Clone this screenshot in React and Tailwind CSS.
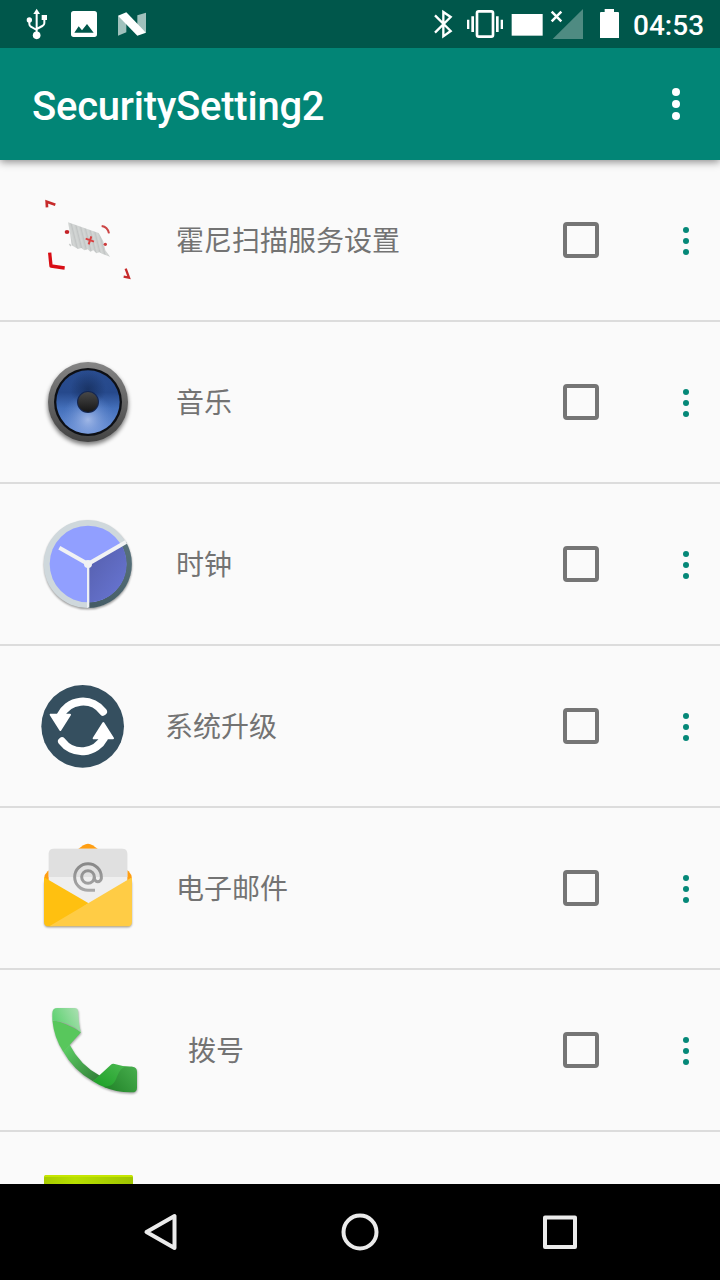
import React from "react";

function ScannerIcon() {
  return (
    <svg className="h-[120px] w-[140px] shrink-0" viewBox="0 0 420 360" fill="none">
      <defs>
        <pattern id="bars" width="13" height="20" patternUnits="userSpaceOnUse" patternTransform="skewX(14)">
          <rect width="13" height="20" fill="#cdd0cf" />
          <rect x="2" width="3" height="20" fill="#c0c3c3" />
          <rect x="9" width="2" height="20" fill="#d9dcdb" />
        </pattern>
        <filter id="soft" x="-20%" y="-20%" width="140%" height="140%">
          <feGaussianBlur stdDeviation="1.6" />
        </filter>
      </defs>
      <g filter="url(#soft)">
        <path d="M144 127L236 159L250 184L256 211L270 230L246 221L238 217L229 220L220 211L211 215L203 208L193 211L184 204L174 207L160 199L155 195L151 165Z" fill="url(#bars)" />
        <path d="M148 192l5 6" stroke="#c9cccb" strokeWidth="4" />
        <path d="M106 74L80 65L81 82" stroke="#c62c2c" strokeWidth="8" />
        <path d="M89 218L93 258L134 264" stroke="#d80c12" strokeWidth="10" strokeLinejoin="round" />
        <path d="M317 266L327 293L311 290" stroke="#c62c2c" strokeWidth="7" />
        <path d="M245 138Q263 140 267 160" stroke="#cc4444" strokeWidth="6" />
        <path d="M197 176L222 185M214 169L206 193" stroke="#d94141" strokeWidth="6" />
        <ellipse cx="141" cy="156" rx="7" ry="6" fill="#c42428" />
        <ellipse cx="256" cy="193" rx="5" ry="5" fill="#cc3a3c" />
      </g>
    </svg>
  );
}

function MusicIcon() {
  return (
    <svg className="h-[120px] w-[140px] shrink-0" viewBox="0 6 420 360">
      <defs>
        <linearGradient id="rim" x1="0" y1="0" x2="0" y2="1">
          <stop offset="0" stopColor="#858585" />
          <stop offset="1" stopColor="#434343" />
        </linearGradient>
        <linearGradient id="cone" x1="0" y1="0" x2="0" y2="1">
          <stop offset="0" stopColor="#294c8e" />
          <stop offset="0.35" stopColor="#26498c" />
          <stop offset="0.6" stopColor="#4470bb" />
          <stop offset="1" stopColor="#6b91d7" />
        </linearGradient>
        <radialGradient id="coneLight" cx="0.5" cy="0.78" r="0.42">
          <stop offset="0" stopColor="#adc1ec" stopOpacity="0.85" />
          <stop offset="1" stopColor="#6b91d7" stopOpacity="0" />
        </radialGradient>
        <radialGradient id="coneDark" cx="0.5" cy="0.3" r="0.28">
          <stop offset="0" stopColor="#152c58" stopOpacity="0.75" />
          <stop offset="1" stopColor="#152c58" stopOpacity="0" />
        </radialGradient>
        <linearGradient id="cap" x1="0" y1="0" x2="0" y2="1">
          <stop offset="0" stopColor="#484848" />
          <stop offset="1" stopColor="#171717" />
        </linearGradient>
        <filter id="speakerShadow" x="-20%" y="-20%" width="140%" height="140%">
          <feGaussianBlur stdDeviation="6" />
        </filter>
      </defs>
      <circle cx="204" cy="194" r="121" fill="#000" opacity="0.5" filter="url(#speakerShadow)" />
      <circle cx="204" cy="186" r="120" fill="url(#rim)" />
      <circle cx="204" cy="186" r="102" fill="#0d0f14" />
      <circle cx="204" cy="186" r="95" fill="url(#cone)" />
      <circle cx="204" cy="186" r="95" fill="url(#coneDark)" />
      <circle cx="204" cy="186" r="95" fill="url(#coneLight)" />
      <circle cx="204" cy="186" r="33" fill="#142650" />
      <circle cx="204" cy="186" r="30" fill="url(#cap)" />
    </svg>
  );
}

function ClockIcon() {
  return (
    <svg className="h-[120px] w-[140px] shrink-0" viewBox="0 12 420 360">
      <defs>
        <linearGradient id="clockShade" x1="204" y1="192" x2="310" y2="270" gradientUnits="userSpaceOnUse">
          <stop offset="0" stopColor="#5862b2" />
          <stop offset="1" stopColor="#6673cf" />
        </linearGradient>
        <linearGradient id="clockRim" x1="330" y1="130" x2="210" y2="320" gradientUnits="userSpaceOnUse">
          <stop offset="0" stopColor="#58727c" />
          <stop offset="1" stopColor="#445b64" />
        </linearGradient>
        <filter id="clockShadow" x="-20%" y="-20%" width="140%" height="140%">
          <feGaussianBlur stdDeviation="3" />
        </filter>
      </defs>
      <circle cx="204" cy="196" r="132" fill="#000" opacity="0.4" filter="url(#clockShadow)" />
      <circle cx="203" cy="192" r="132" fill="#cfd8dc" />
      <path d="M204 192L318 126A132 132 0 0 1 204 324Z" fill="url(#clockRim)" />
      <circle cx="204" cy="192" r="115" fill="#919fff" />
      <path d="M204 192L304 134A115 115 0 0 1 204 307Z" fill="url(#clockShade)" />
      <path d="M204 192L318 126" stroke="#f1f2f4" strokeWidth="12" />
      <path d="M204 192L118 143" stroke="#f1f2f4" strokeWidth="12" />
      <path d="M204.500 192V323" stroke="#eef0f4" strokeWidth="7" />
      <circle cx="204" cy="192" r="12" fill="#f1f2f4" />
    </svg>
  );
}

function UpdateIcon() {
  return (
    <svg className="h-[120px] w-[140px] shrink-0" viewBox="0 -12 420 360" fill="none">
      <circle cx="188" cy="169" r="124" fill="#354f5f" />
      <path d="M121 138A75 75 0 0 1 249 125" stroke="#fff" strokeWidth="24" strokeLinecap="round" />
      <path d="M92 134H150L121 180Z" fill="#fff" stroke="#fff" strokeWidth="6" strokeLinejoin="round" />
      <path d="M126 214A75 75 0 0 0 252 204" stroke="#fff" strokeWidth="24" strokeLinecap="round" />
      <path d="M221 205H279L250 159Z" fill="#fff" stroke="#fff" strokeWidth="6" strokeLinejoin="round" />
    </svg>
  );
}

function EmailIcon() {
  return (
    <svg className="h-[120px] w-[140px] shrink-0" viewBox="0 -6 420 360" fill="none">
      <defs>
        <linearGradient id="at" x1="0" y1="96" x2="0" y2="186" gradientUnits="userSpaceOnUse">
          <stop offset="0" stopColor="#868686" />
          <stop offset="1" stopColor="#aaaaaa" />
        </linearGradient>
        <filter id="mailShadow" x="-20%" y="-20%" width="140%" height="140%">
          <feGaussianBlur stdDeviation="3" />
        </filter>
      </defs>
      <rect x="73" y="150" width="262" height="142" rx="12" fill="#000" opacity="0.4" filter="url(#mailShadow)" />
      <path d="M72 146Q73 133 83 124L190 46Q204 37 218 46L326 124Q335 133 336 146L320 160H88Z" fill="#ff9e12" />
      <path d="M86 72Q86 56 102 56H306Q322 56 322 72V230H86Z" fill="#efefef" />
      <path d="M86 72Q86 56 102 56H306Q322 56 322 72V141H86Z" fill="#e0e0e0" />
      <path d="M72 142L206 220L100 289H86Q72 289 72 275Z" fill="#ffc010" />
      <path d="M336 142V275Q336 289 322 289H88Z" fill="#ffcc45" />
      <circle cx="204" cy="141" r="19" stroke="url(#at)" strokeWidth="9" />
      <path d="M225 181H204A40 40 0 1 1 244 141V146A11 13 0 0 1 223 146V141" stroke="url(#at)" strokeWidth="9" />
    </svg>
  );
}

function PhoneIcon() {
  return (
    <svg className="h-[120px] w-[140px] shrink-0" viewBox="0 0 420 360">
      <defs>
        <linearGradient id="earpiece" x1="98" y1="100" x2="175" y2="60" gradientUnits="userSpaceOnUse">
          <stop offset="0" stopColor="#59d16d" />
          <stop offset="1" stopColor="#a9dfb0" />
        </linearGradient>
        <linearGradient id="handle" x1="135" y1="180" x2="235" y2="270" gradientUnits="userSpaceOnUse">
          <stop offset="0" stopColor="#5acb62" />
          <stop offset="1" stopColor="#327e38" />
        </linearGradient>
        <linearGradient id="mouthpiece" x1="345" y1="235" x2="275" y2="300" gradientUnits="userSpaceOnUse">
          <stop offset="0" stopColor="#45ab4b" />
          <stop offset="1" stopColor="#26882d" />
        </linearGradient>
        <linearGradient id="fold" x1="290" y1="220" x2="245" y2="290" gradientUnits="userSpaceOnUse">
          <stop offset="0" stopColor="#45b54b" />
          <stop offset="1" stopColor="#21a32b" />
        </linearGradient>
        <filter id="phoneShadow" x="-20%" y="-20%" width="140%" height="140%">
          <feGaussianBlur stdDeviation="3" />
        </filter>
      </defs>
      <path d="M97 70Q97 54 112 54H163Q175 54 175 67Q176 104 183 127L149 164Q180 225 240 257L276 222Q305 231 337 230Q351 231 351 245V293Q351 307 336 307Q272 308 219 274Q160 240 130 185Q97 135 97 70Z" transform="translate(1 4)" fill="#000" opacity="0.35" filter="url(#phoneShadow)" />
      <path d="M149 164Q180 225 240 257L219 274Q160 240 130 185Z" fill="url(#handle)" />
      <path d="M97 91Q140 98 183 127L130 186Q102 143 97 91Z" fill="#58c75c" />
      <path d="M97 70Q97 54 112 54H163Q175 54 175 67Q176 104 183 127Q150 97 97 91Z" fill="url(#earpiece)" />
      <path d="M219 274L272 225Q278 219 287 223Q310 231 337 230L290 295L260 294Q238 287 219 274Z" fill="url(#fold)" />
      <path d="M314 230H337Q351 231 351 245V293Q351 307 336 307Q291 308 250 290C300 290 281 247 314 230Z" fill="url(#mouthpiece)" />
    </svg>
  );
}

function GreenAppIcon() {
  return (
    <svg className="h-[120px] w-[140px] shrink-0" viewBox="0 0 140 120">
      <defs>
        <linearGradient id="lime" x1="0" y1="0" x2="1" y2="0">
          <stop offset="0" stopColor="#a8cb00" />
          <stop offset="0.35" stopColor="#b7df00" />
          <stop offset="1" stopColor="#9fc400" />
        </linearGradient>
      </defs>
      <rect x="24" y="23" width="89" height="80" rx="3" fill="url(#lime)" />
      <path d="M26 23H111Q113 23 113 25H24Q24 23 26 23Z" fill="#c6e600" />
    </svg>
  );
}

const apps = [
  { name: "霍尼扫描服务设置", Icon: ScannerIcon, indent: "pl-4" },
  { name: "音乐", Icon: MusicIcon, indent: "pl-4" },
  { name: "时钟", Icon: ClockIcon, indent: "pl-4" },
  { name: "系统升级", Icon: UpdateIcon, indent: "pl-[5px]" },
  { name: "电子邮件", Icon: EmailIcon, indent: "pl-4" },
  { name: "拨号", Icon: PhoneIcon, indent: "pl-7" },
];

function AppRow({ name, Icon, indent }) {
  return (
    <li className="flex h-[162px] shrink-0 items-center border-b-2 border-[#dcdcdc] pl-5">
      <Icon />
      <span className={`flex-1 pb-0.5 text-[28px] leading-10 text-[#737373] ${indent}`}>{name}</span>
      <button aria-label={name} className="mr-[83px] size-9 rounded-[4px] border-4 border-[#757575]" />
      <button className="mt-0.5 mr-[31px] flex w-[7px] flex-col items-center gap-[5px]">
        <span className="size-[6px] rounded-full bg-[#058878]" />
        <span className="size-[6px] rounded-full bg-[#058878]" />
        <span className="size-[6px] rounded-full bg-[#058878]" />
      </button>
    </li>
  );
}

function StatusBar() {
  return (
    <div className="z-20 flex h-12 shrink-0 items-center bg-[#00574b] pl-6 text-white">
      <svg className="h-12 w-6" viewBox="72 0 72 144" fill="none" stroke="#fff" strokeWidth="6">
        <path d="M110 106V36M88 60V72Q88 78 94 81L110 90M133 53V70Q133 75 127 78L110 87" />
        <path d="M100 42L110 26L120 42Z" fill="#fff" stroke="none" />
        <circle cx="110" cy="106" r="11.500" fill="#fff" stroke="none" />
        <circle cx="88" cy="60" r="8" fill="#fff" stroke="none" />
        <path d="M125 45H141V60H125Z" fill="#fff" stroke="none" />
      </svg>
      <svg className="ml-5 h-12 w-8" viewBox="204 0 96 144">
        <path fillRule="evenodd" d="M221 33H283Q291 33 291 41V103Q291 111 283 111H221Q213 111 213 103V41Q213 33 221 33ZM223 98H281L261 72L246 91L236 79Z" fill="#fff" />
      </svg>
      <svg className="ml-4 h-12 w-8" viewBox="348 0 96 144">
        <path d="M354 47L379 60V97L354 107ZM412 46L438 38V98L412 79Z" fill="#a0c1bc" />
        <path d="M354 47L379 37L438 98L412 107Z" fill="#fff" />
      </svg>
      <div className="ml-auto flex items-center">
        <svg className="h-12 w-8" viewBox="27 0 96 144" fill="none" stroke="#fff" strokeWidth="7">
          <path d="M45 46L92 93L70 109V36L92 51L45 98" />
        </svg>
        <svg className="ml-1 h-12 w-10" viewBox="135 0 120 144" fill="#fff">
          <rect x="171" y="34" width="48" height="76" rx="5" fill="none" stroke="#fff" strokeWidth="8" />
          <path d="M141 59H148V87H141ZM154 49H162V96H154ZM228 49H236V96H228ZM242 59H249V87H242Z" />
        </svg>
        <svg className="h-12 w-10" viewBox="255 0 120 144">
          <rect x="275" y="42" width="93" height="65" fill="#fff" />
        </svg>
        <svg className="h-12 w-10" viewBox="375 0 120 144">
          <path d="M489 27V117H398Z" fill="#4f8b82" />
          <path d="M395 35L424 64M424 35L395 64" stroke="#fff" strokeWidth="7.500" />
        </svg>
        <svg className="ml-3 h-12 w-6" viewBox="531 0 72 144">
          <path d="M554 27H582V36H594Q597 36 597 39V114H540V39Q540 36 543 36H554Z" fill="#fff" />
        </svg>
        <span className="ml-3 w-[87px] pt-1 font-['Roboto',sans-serif] text-[28px] leading-8 font-medium">04:53</span>
      </div>
    </div>
  );
}

export default function App() {
  return (
    <div className="flex h-[1280px] w-[720px] flex-col overflow-hidden bg-[#fafafa] font-['Noto_Sans_CJK_SC',sans-serif]">
      <StatusBar />
      <header className="z-10 flex h-28 shrink-0 items-center justify-between bg-[#028576] pr-10 pl-8 shadow-[0_2px_8px_rgba(0,0,0,0.45)]">
        <h1 className="pt-1.5 font-['Roboto',sans-serif] text-[40px] leading-none font-medium tracking-[-0.24px] text-white">SecuritySetting2</h1>
        <button aria-label="More" className="flex flex-col gap-1">
          <span className="size-2 rounded-full bg-white" />
          <span className="size-2 rounded-full bg-white" />
          <span className="size-2 rounded-full bg-white" />
        </button>
      </header>
      <ul className="flex min-h-0 flex-1 flex-col overflow-hidden">
        {apps.map((app) => (
          <AppRow key={app.name} {...app} />
        ))}
        <li className="flex h-40 shrink-0 items-center pl-5">
          <GreenAppIcon />
        </li>
      </ul>
      <nav className="flex h-24 shrink-0 items-center justify-center gap-[152px] bg-black">
        <svg className="size-12" viewBox="0 0 48 48" fill="none" stroke="#ebebeb" strokeWidth="4" strokeLinejoin="round">
          <path d="M38.500 8V40L10.500 24Z" />
        </svg>
        <svg className="size-12" viewBox="0 0 48 48" fill="none" stroke="#ebebeb" strokeWidth="4">
          <circle cx="24" cy="24" r="16.500" />
        </svg>
        <svg className="size-12" viewBox="0 0 48 48" fill="none" stroke="#ebebeb" strokeWidth="4" strokeLinejoin="round">
          <rect x="9" y="9.500" width="30" height="29.500" />
        </svg>
      </nav>
    </div>
  );
}
